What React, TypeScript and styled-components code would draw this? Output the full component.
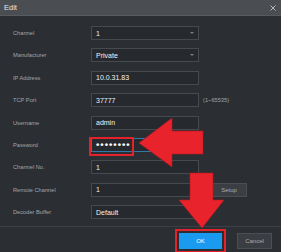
import { FC, Fragment } from "react";
import styled, { createGlobalStyle } from "styled-components";

const GlobalStyle = createGlobalStyle`
  html, body {
    margin: 0;
    padding: 0;
    background: #2b2e32;
  }
  body {
    font-family: "Liberation Sans", Arial, sans-serif;
  }
`;

const Dialog = styled.div`
  position: relative;
  width: 281px;
  height: 252px;
  display: flex;
  flex-direction: column;
  background: #2b2e32;
  overflow: hidden;
`;

const TitleBar = styled.header`
  height: 15px;
  display: flex;
  align-items: center;
  justify-content: space-between;
  padding: 0 5px 0 4px;
  background: #4a4e52;
  border-bottom: 1px solid #575b5f;
`;

const TitleText = styled.span`
  color: #e6e8ea;
  font-size: 7.5px;
`;

const CloseIcon = styled.svg`
  width: 6px;
  height: 6px;
  display: block;
`;

const Body = styled.div`
  display: grid;
  grid-template-columns: 78px 108px auto;
  grid-auto-rows: 14px;
  row-gap: 8.4px;
  align-items: center;
  padding: 10px 0 7px 13px;
  border-bottom: 1px solid #3c4044;
`;

const Label = styled.span`
  color: #a3a6aa;
  font-size: 5.7px;
`;

const Field = styled.div<{ $focus?: boolean }>`
  position: relative;
  box-sizing: border-box;
  height: 14px;
  display: flex;
  align-items: center;
  padding: 0 4px;
  background: #26292d;
  border: 1px solid ${(p) => (p.$focus ? "#2f7aa8" : "#46494d")};
  color: #f2f3f4;
  font-size: 7px;
`;

const Caret = styled.span`
  margin-left: auto;
  width: 0;
  height: 0;
  border-left: 2px solid transparent;
  border-right: 2px solid transparent;
  border-top: 2px solid #7b7f83;
`;

const Dots = styled.span`
  font-size: 9.5px;
  letter-spacing: 1px;
  color: #ffffff;
  font-weight: bold;
`;

const Mark = styled.span`
  position: absolute;
  left: -3px;
  top: -2px;
  width: 45px;
  height: 19px;
  box-sizing: border-box;
  border: 2px solid #e3232b;
`;

const Hint = styled.span`
  margin-left: 4px;
  color: #a3a6aa;
  font-size: 5.7px;
`;

const SideButton = styled.button`
  margin-left: 12px;
  width: 36px;
  height: 14px;
  padding: 0;
  background: #3b3f43;
  border: 1px solid #4b4f53;
  color: #a8abae;
  font-family: inherit;
  font-size: 6px;
`;

const Empty = styled.span``;

const Footer = styled.footer`
  display: flex;
  justify-content: flex-end;
  gap: 15px;
  padding: 6px 9px 0 0;
`;

const Button = styled.button<{ $primary?: boolean; $marked?: boolean }>`
  height: 16px;
  width: ${(p) => (p.$primary ? "43px" : "35px")};
  padding: 0;
  background: ${(p) => (p.$primary ? "#1a9bf0" : "#3a3e42")};
  border: 1px solid ${(p) => (p.$primary ? "#1a9bf0" : "#4b4f53")};
  color: ${(p) => (p.$primary ? "#ffffff" : "#a8abae")};
  font-family: inherit;
  font-size: 6px;
  outline: ${(p) => (p.$marked ? "2px solid #e3232b" : "none")};
  outline-offset: 2px;
`;

const Arrows = styled.svg`
  position: absolute;
  left: 0;
  top: 0;
  width: 281px;
  height: 252px;
  pointer-events: none;
`;

type Row = {
  label: string;
  value: string;
  select?: boolean;
  extra?: "hint" | "setup";
  password?: boolean;
};

const rows: Row[] = [
  { label: "Channel", value: "1", select: true },
  { label: "Manufacturer", value: "Private", select: true },
  { label: "IP Address", value: "10.0.31.83" },
  { label: "TCP Port", value: "37777", extra: "hint" },
  { label: "Username", value: "admin" },
  { label: "Password", value: "••••••••", password: true },
  { label: "Channel No.", value: "1" },
  { label: "Remote Channel", value: "1", extra: "setup" },
  { label: "Decoder Buffer", value: "Default" },
];

const App: FC = () => {
  return (
    <>
      <GlobalStyle />
      <Dialog>
        <TitleBar>
          <TitleText>Edit</TitleText>
          <CloseIcon viewBox="0 0 6 6">
            <path d="M0.5 0.5 L5.5 5.5 M5.5 0.5 L0.5 5.5" stroke="#b5b8bb" strokeWidth="1" />
          </CloseIcon>
        </TitleBar>

        <Body>
          {rows.map((row) => (
            <Fragment key={row.label}>
              <Label>{row.label}</Label>
              <Field $focus={row.password}>
                {row.password ? <Dots>{row.value}</Dots> : row.value}
                {row.select && <Caret />}
                {row.password && <Mark />}
              </Field>
              {row.extra === "hint" && <Hint>(1~65535)</Hint>}
              {row.extra === "setup" && <SideButton>Setup</SideButton>}
              {!row.extra && <Empty />}
            </Fragment>
          ))}
        </Body>

        <Footer>
          <Button $primary $marked>OK</Button>
          <Button>Cancel</Button>
        </Footer>

        <Arrows viewBox="0 0 281 252">
          <polygon
            points="139,143 172,118 172,131 203,131 203,154 172,154 172,167"
            fill="#e8232b"
            stroke="#b51a21"
            strokeWidth="0.6"
          />
          <polygon
            points="190,173 213,173 213,200 224,200 202,228 179,200 190,200"
            fill="#e8232b"
            stroke="#b51a21"
            strokeWidth="0.6"
          />
        </Arrows>
      </Dialog>
    </>
  );
};

export default App;
